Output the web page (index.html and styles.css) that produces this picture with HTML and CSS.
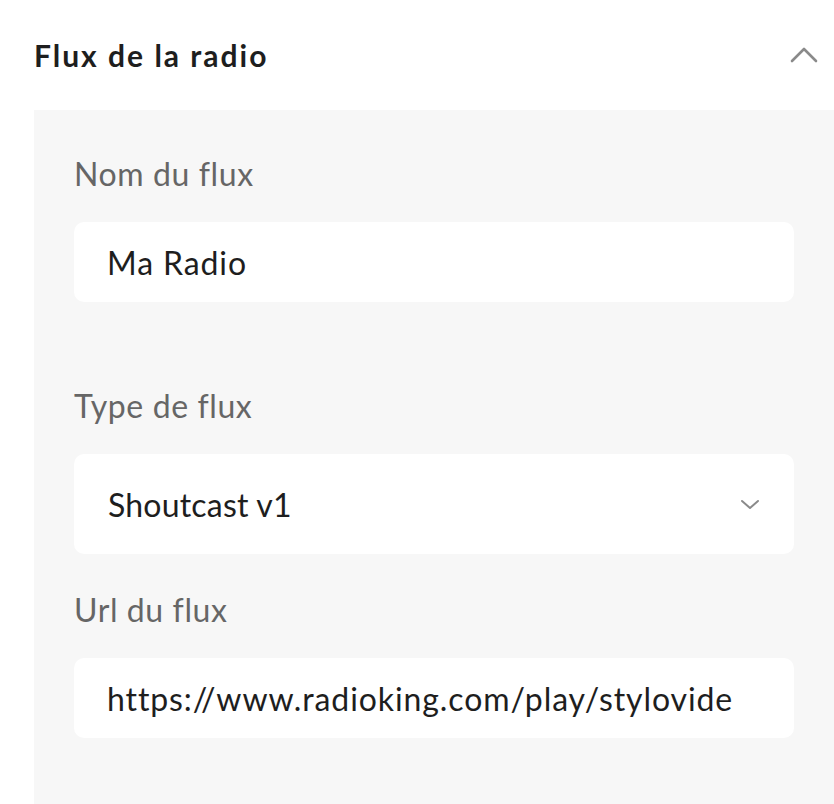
FILE: index.html
```html
<!DOCTYPE html>
<html lang="fr">
<head>
  <meta charset="UTF-8">
  <meta name="viewport" content="width=device-width, initial-scale=1.0">
  <title>Flux de la radio</title>
  <link rel="stylesheet" href="styles.css">
</head>
<body>

  <header class="section-header">
    <h2>Flux de la radio</h2>
    <svg class="toggle" width="28" height="18" viewBox="0 0 28 18">
      <polyline points="2,15 14,3 26,15" fill="none" stroke="#8a8a8a" stroke-width="2.6" stroke-linecap="round" stroke-linejoin="round"/>
    </svg>
  </header>

  <main class="panel">
    <div class="field field-spaced">
      <label for="stream-name">Nom du flux</label>
      <input type="text" id="stream-name" value="Ma Radio">
    </div>

    <div class="field">
      <label>Type de flux</label>
      <div class="select">
        <span>Shoutcast v1</span>
        <svg width="20" height="14" viewBox="0 0 20 14">
          <polyline points="2,4 10,11 18,4" fill="none" stroke="#8a8a8a" stroke-width="2" stroke-linecap="round" stroke-linejoin="round"/>
        </svg>
      </div>
    </div>

    <div class="field field-last">
      <label for="stream-url">Url du flux</label>
      <input type="text" id="stream-url" class="url" value="https://www.radioking.com/play/stylovide">
    </div>
  </main>

</body>
</html>
```

FILE: styles.css
```css
body {
  font-family: 'Lato', sans-serif;
  background-color: #fff;
  margin: 0;
  padding: 0;
}

.section-header {
  height: 110px;
  padding: 0 16px 0 34px;
  display: flex;
  align-items: center;
  justify-content: space-between;
}

.section-header h2 {
  margin: 0;
  font-size: 30px;
  font-weight: bold;
  letter-spacing: 2px;
  color: #1e1e1e;
}

.panel {
  margin-left: 34px;
  background-color: #f7f7f7;
  padding: 44px 40px 66px 40px;
}

.field {
  margin-bottom: 36px;
}

.field-spaced {
  margin-bottom: 84px;
}

.field-last {
  margin-bottom: 0;
}

label {
  display: block;
  font-size: 32px;
  line-height: 40px;
  letter-spacing: 0.6px;
  color: #666;
  margin-bottom: 28px;
}

input[type="text"] {
  display: block;
  box-sizing: border-box;
  width: 100%;
  height: 80px;
  padding: 0 33px;
  border: none;
  border-radius: 10px;
  background-color: #fff;
  font-family: inherit;
  font-size: 32px;
  letter-spacing: 0.9px;
  color: #1e1e1e;
  outline: none;
}

.select {
  height: 100px;
  padding: 0 34px 0 34px;
  border-radius: 10px;
  background-color: #fff;
  display: flex;
  align-items: center;
  justify-content: space-between;
  font-size: 32px;
  letter-spacing: 0.2px;
  color: #1e1e1e;
}
```
